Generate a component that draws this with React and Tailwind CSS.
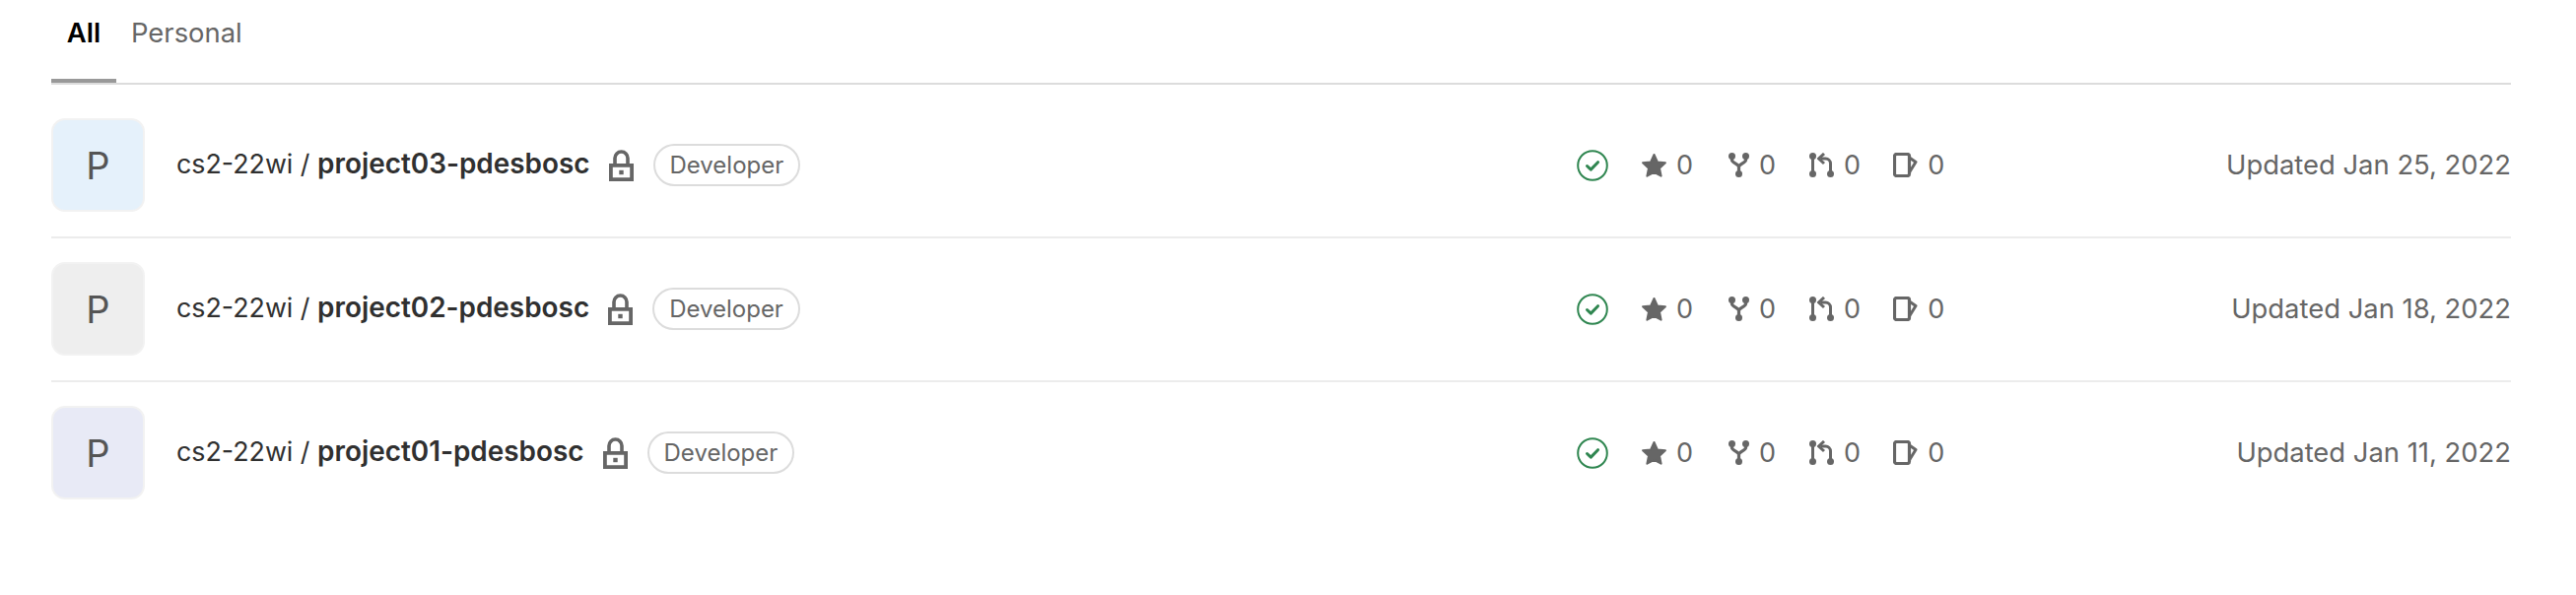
const font = { fontFamily: 'Inter, "Noto Sans", sans-serif' };

const Lock = () => (
  <svg width="25" height="32" viewBox="0 0 25 32" className="shrink-0" fill="none">
    <path d="M6 15V8.500a6.500 6.500 0 0 1 13 0V15" stroke="#666" strokeWidth="3.600" />
    <path fillRule="evenodd" clipRule="evenodd" d="M0 14h25v18H0zM3.800 17.800v10.400h17.400V17.800z" fill="#666" />
    <rect x="10.300" y="20.800" width="4.400" height="4.400" fill="#666" />
  </svg>
);

const Check = () => (
  <svg width="32" height="32" viewBox="0 0 32 32" fill="none" className="shrink-0">
    <circle cx="16" cy="16" r="14.800" stroke="#2f8650" strokeWidth="2" />
    <path d="M10.500 16.500l3.800 3.600 7.200-7.400" stroke="#2f8650" strokeWidth="3" strokeLinecap="round" strokeLinejoin="round" />
  </svg>
);

const Star = () => (
  <svg width="25" height="24" viewBox="0 0 25 24" className="shrink-0">
    <path d="M12.500 1l3.400 7.400 8 .9-5.900 5.400 1.600 8L12.500 18.800 5.400 22.700l1.600-8L1.100 9.300l8-.9z" fill="#666" stroke="#666" strokeWidth="2" strokeLinejoin="round" />
  </svg>
);

const Fork = () => (
  <svg width="21" height="25" viewBox="0 0 21 25" fill="none" className="shrink-0">
    <circle cx="3.500" cy="3.500" r="3.500" fill="#666" />
    <circle cx="17.500" cy="3.500" r="3.500" fill="#666" />
    <circle cx="10.500" cy="21.500" r="3.500" fill="#666" />
    <path d="M3.500 4v3.500c0 2.800 7 4 7 7v7M17.500 4v3.500c0 2.800-7 4-7 7" stroke="#666" strokeWidth="3.200" />
  </svg>
);

const Merge = () => (
  <svg width="25" height="25" viewBox="0 0 25 25" fill="none" className="shrink-0">
    <circle cx="3.500" cy="3.500" r="3.500" fill="#666" />
    <circle cx="3.500" cy="21.500" r="3.500" fill="#666" />
    <circle cx="21.500" cy="21.500" r="3.500" fill="#666" />
    <path d="M3.500 4v17M21.500 21V11a5 5 0 0 0-5-5h-5" stroke="#666" strokeWidth="3" />
    <path d="M15 1l-5.500 5 5.500 5" stroke="#666" strokeWidth="3" strokeLinejoin="round" />
  </svg>
);

const Issue = () => (
  <svg width="25" height="25" viewBox="0 0 25 25" fill="none" className="shrink-0">
    <path d="M3.500 1.500h11a2 2 0 0 1 2 2v18a2 2 0 0 1-2 2h-11a2 2 0 0 1-2-2v-18a2 2 0 0 1 2-2z" stroke="#666" strokeWidth="3.200" />
    <path d="M16.500 5l6.500 4.500L16.500 20" stroke="#666" strokeWidth="3" strokeLinejoin="round" />
  </svg>
);

const Stat = ({ icon, className }) => (
  <div className={`flex items-center gap-[10px] ${className}`}>
    {icon}
    <span className="text-[27px] leading-none text-[#666]">0</span>
  </div>
);

const rows = [
  { name: 'project03-pdesbosc', date: 'Updated Jan 25, 2022', bg: 'bg-[#e5f1fb]', border: true },
  { name: 'project02-pdesbosc', date: 'Updated Jan 18, 2022', bg: 'bg-[#eeeeee]', border: true },
  { name: 'project01-pdesbosc', date: 'Updated Jan 11, 2022', bg: 'bg-[#e8eaf6]', border: false },
];

const Row = ({ name, date, bg, border }) => (
  <div className={`flex h-[146px] items-start pt-[24px] ${border ? 'border-b-2 border-[#ececec]' : ''}`}>
    <div className={`flex h-[95px] w-[95px] shrink-0 items-center justify-center rounded-[14px] border-2 border-[#f2f2f2] text-[38px] leading-none text-[#555] ${bg}`}>
      P
    </div>
    <div className="ml-[32px] flex h-[95px] w-[1421px] shrink-0 items-center">
      <span className="pb-[2px] text-[26.8px] leading-none text-[#303030]">
        cs2-22wi / <span className="text-[27.9px] font-semibold">{name}</span>
      </span>
      <span className="ml-[19px]"><Lock /></span>
      <span className="ml-[20px] flex h-[43px] items-center rounded-full border-2 border-[#dcdcdc] px-[15px] text-[24px] leading-none text-[#666]">
        Developer
      </span>
    </div>
    <div className="flex h-[95px] items-center">
      <Check />
      <Stat icon={<Star />} className="ml-[34px]" />
      <Stat icon={<Fork />} className="ml-[36px]" />
      <Stat icon={<Merge />} className="ml-[34px]" />
      <Stat icon={<Issue />} className="ml-[33px]" />
    </div>
    <div className="ml-auto flex h-[95px] items-center text-[27.4px] leading-none text-[#666]">{date}</div>
  </div>
);

export default function App() {
  return (
    <div style={font} className="min-h-[604px] bg-white pl-[52px] pr-[66px]">
      <div className="flex h-[86px] border-b-2 border-[#dcdcdc]">
        <div className="h-[84px] w-[66px] border-b-4 border-[#999] pt-[16px] text-center text-[27.4px] leading-[34px] font-semibold text-black">All</div>
        <div className="ml-[15px] h-[84px] pt-[16px] text-[27.4px] leading-[34px] text-[#666]">Personal</div>
      </div>
      <div className="mt-[10px]">
        {rows.map((r) => <Row key={r.name} {...r} />)}
      </div>
    </div>
  );
}
